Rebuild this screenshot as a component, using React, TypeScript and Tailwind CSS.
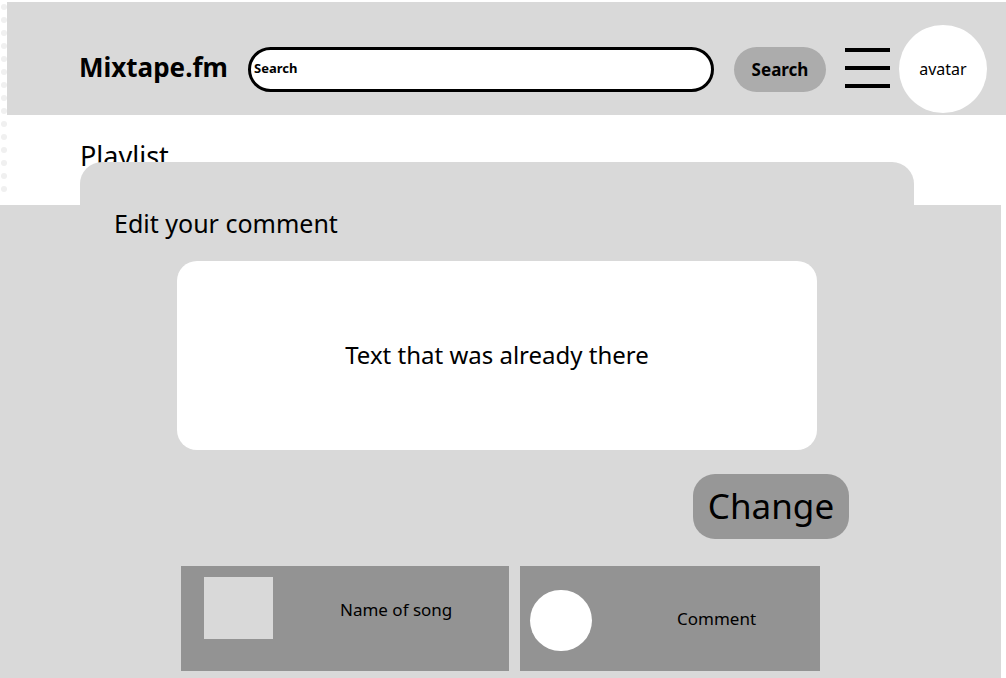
import React from "react";

const font = { fontFamily: '"Noto Sans", "Open Sans", sans-serif' };

function Header() {
  return (
    <header className="ml-[7px] mt-[2px] flex h-[113px] items-center bg-[#d9d9d9] pt-[21px]">
      <div className="ml-[72px] w-[169px] pb-[5px] text-[26px] font-bold leading-none text-black">
        Mixtape.fm
      </div>
      <div className="flex h-[45px] w-[466px] items-center rounded-full border-[3px] border-black bg-white px-[3px]">
        <span className="text-[13px] font-bold text-black">Search</span>
      </div>
      <button className="ml-[20px] h-[45px] w-[92px] rounded-full bg-[#acacac] pt-[2px] text-[17px] font-bold text-black">
        Search
      </button>
      <div className="ml-[19px] -mt-[2px] flex h-[40px] w-[45px] flex-col justify-between">
        <span className="h-[4px] w-full bg-black" />
        <span className="h-[4px] w-full bg-black" />
        <span className="h-[4px] w-full bg-black" />
      </div>
      <div className="ml-[9px] flex h-[88px] w-[88px] items-center justify-center rounded-full bg-white text-[16px] text-black">
        avatar
      </div>
    </header>
  );
}

function EditSheet() {
  return (
    <div className="absolute left-0 top-[162px] flex flex-col">
      <div className="ml-[80px] h-[43px] w-[834px] rounded-t-[22px] bg-[#d9d9d9]" />
      <div className="flex h-[474px] w-[1001px] flex-col bg-[#d9d9d9]">
        <h2 className="ml-[114px] mt-[3px] text-[25px] leading-[30px] text-black">
          Edit your comment
        </h2>
        <div className="ml-[177px] mt-[23px] flex h-[189px] w-[640px] items-center justify-center rounded-[20px] bg-white pb-[2px] text-[24px] text-black">
          Text that was already there
        </div>
        <div className="mt-[24px] flex w-[849px] justify-end">
          <button className="h-[65px] w-[156px] rounded-[22px] bg-[#979797] pb-[1px] text-[35px] text-black">
            Change
          </button>
        </div>
        <div className="ml-[181px] mt-[27px] flex gap-[11px]">
          <div className="flex h-[105px] w-[328px] bg-[#939393] pl-[23px] pt-[11px]">
            <div className="h-[62px] w-[69px] bg-[#d9d9d9]" />
            <div className="ml-[67px] mt-[24px] text-[17px] leading-none text-black">
              Name of song
            </div>
          </div>
          <div className="flex h-[105px] w-[300px] bg-[#939393] pl-[10px] pt-[24px]">
            <div className="h-[61px] w-[62px] rounded-full bg-white" />
            <div className="ml-[85px] mt-[20px] text-[17px] leading-none text-black">
              Comment
            </div>
          </div>
        </div>
      </div>
    </div>
  );
}

export default function App() {
  return (
    <div className="relative h-[678px] w-[1006px] overflow-hidden bg-white" style={font}>
      <div className="absolute left-[1px] top-[4px] flex flex-col gap-[7px]">
        {Array.from({ length: 15 }).map((_, i) => (
          <span key={i} className="h-[6px] w-[6px] rounded-full bg-[#f0f0f0]" />
        ))}
      </div>
      <Header />
      <h1 className="ml-[80px] mt-[25px] text-[27px] leading-[32px] text-black">Playlist</h1>
      <EditSheet />
    </div>
  );
}
